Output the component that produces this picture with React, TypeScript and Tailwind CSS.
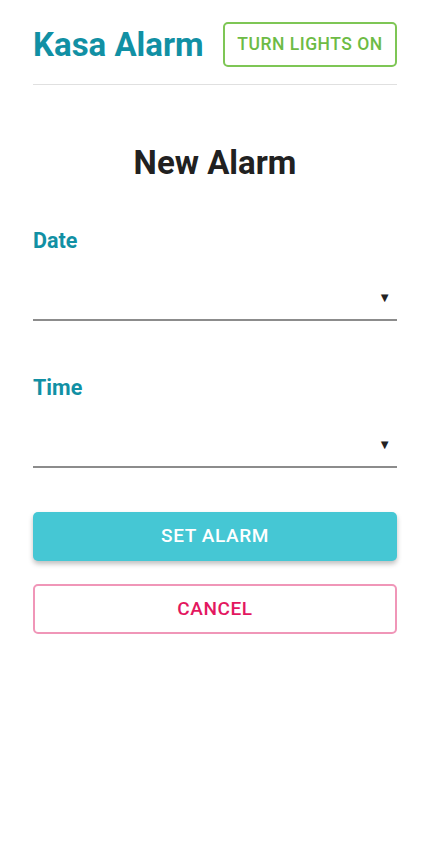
const font = { fontFamily: "Roboto, 'Liberation Sans', sans-serif" };

function SelectField({ label }: { label: string }) {
  return (
    <div className="flex flex-col">
      <label className="text-[21.5px] font-bold leading-[24px] text-[#1190a4]">{label}</label>
      <div className="mt-[31px] flex h-[37px] items-center justify-end border-b-2 border-[#8c8c8c] pb-[8px]">
        <span className="mr-[6px] text-[13px] leading-none text-[#222]">▼</span>
      </div>
    </div>
  );
}

export default function App() {
  return (
    <div className="min-h-[844px] bg-white px-[33px]" style={font}>
      <header className="flex items-center justify-between pt-[22px] pb-[17px] border-b border-[#e0e0e0]">
        <h1 className="text-[33px] font-bold leading-[40px] text-[#1190a4]">Kasa Alarm</h1>
        <button className="h-[45px] w-[174px] rounded-[5px] border-2 border-[#7ec655] text-[17.5px] font-medium tracking-[0.5px] text-[#6dbb45]">
          TURN LIGHTS ON
        </button>
      </header>

      <h2 className="mt-[58px] text-center text-[33px] font-bold leading-[40px] text-[#212121]">New Alarm</h2>

      <div className="mt-[46px] flex flex-col gap-[55px]">
        <SelectField label="Date" />
        <SelectField label="Time" />
      </div>

      <div className="mt-[44px] flex flex-col gap-[23px]">
        <button className="h-[49px] w-full rounded-[5px] bg-[#45c7d4] text-[19px] font-medium tracking-[0.6px] text-white shadow-[0_3px_5px_rgba(0,0,0,0.25)]">
          SET ALARM
        </button>
        <button className="h-[50px] w-full rounded-[5px] border-2 border-[#f096b8] text-[19px] font-medium tracking-[0.6px] text-[#e3175f]">
          CANCEL
        </button>
      </div>
    </div>
  );
}
